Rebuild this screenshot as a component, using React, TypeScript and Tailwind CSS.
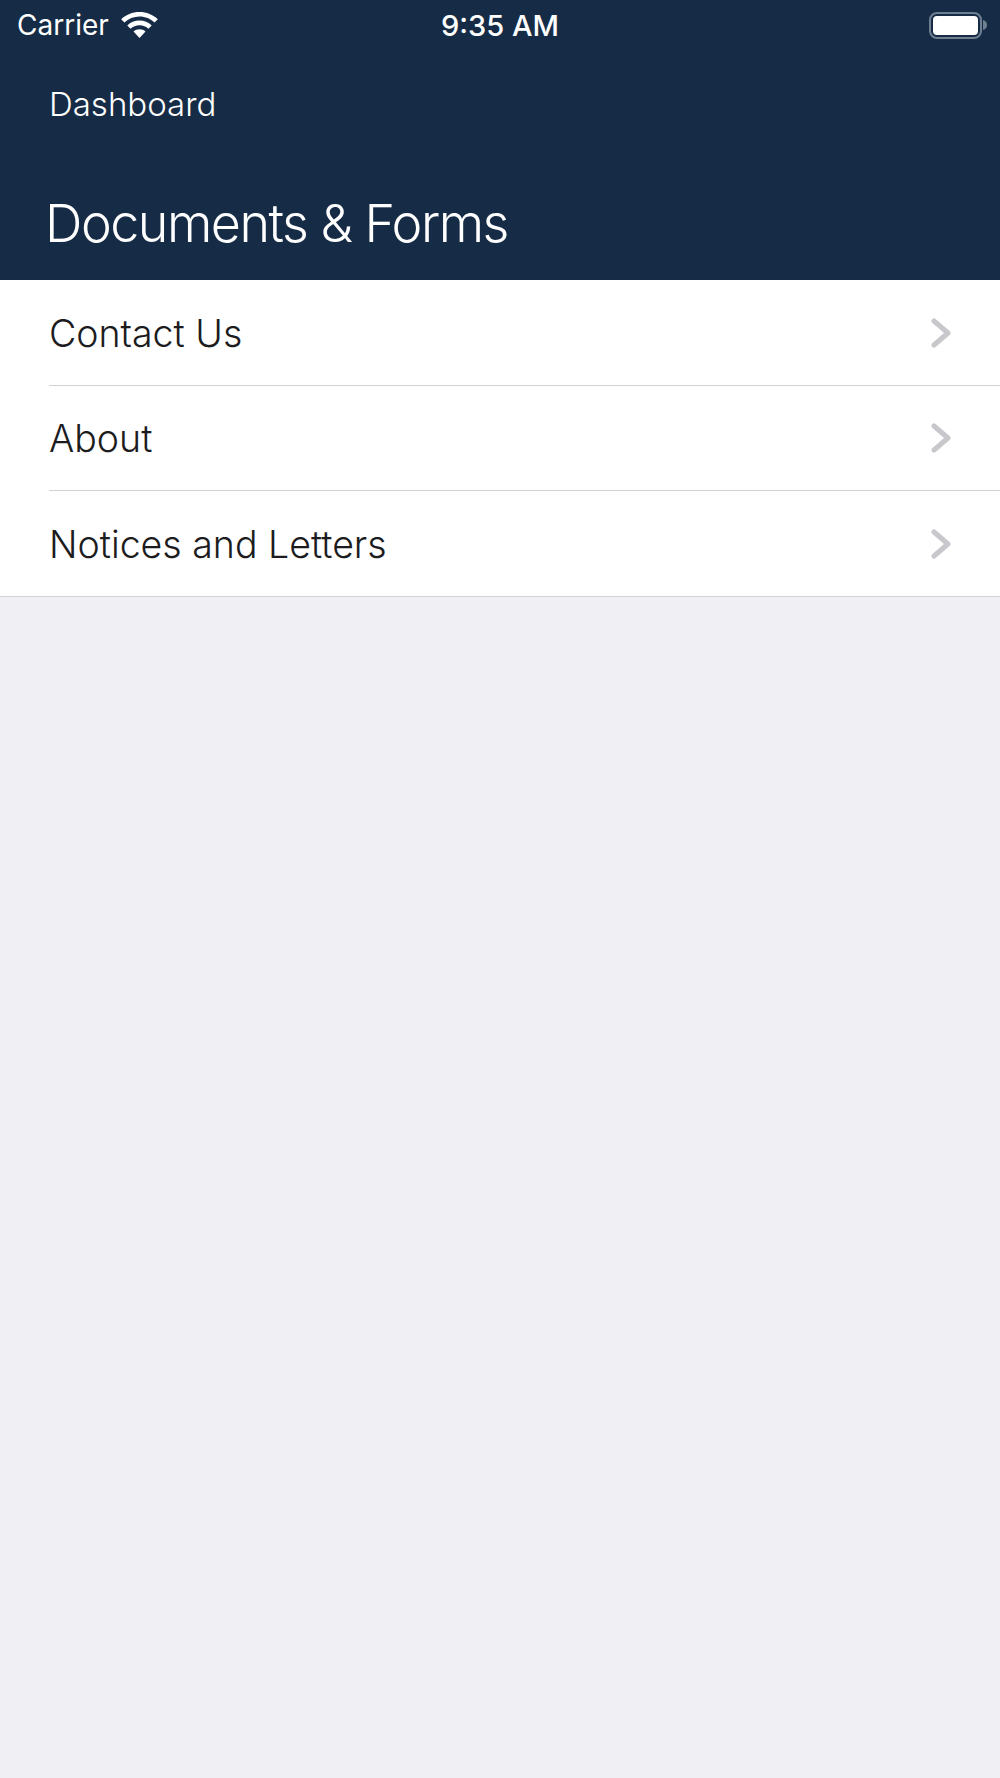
const rows = [
  { label: "Contact Us", box: "h-[106px] border-b border-[#d1d1d6]" },
  { label: "About", box: "h-[105px] border-b border-[#d1d1d6]" },
  { label: "Notices and Letters", box: "h-[105px]" },
];

function WifiIcon() {
  return (
    <svg width="37" height="27" viewBox="0 0 37 27" fill="#fff">
      <path d="M18.5 0C11.4 0 5 2.7.2 7.2l3.2 3.4C7.400 6.900 12.700 4.600 18.500 4.600s11.100 2.300 15.100 6l3.200-3.400C32 2.700 25.600 0 18.500 0z" />
      <path d="M18.500 8.600c-4.700 0-9 1.800-12.200 4.800l3.200 3.400c2.400-2.200 5.500-3.600 9-3.600s6.600 1.400 9 3.600l3.200-3.400c-3.200-3-7.500-4.800-12.200-4.800z" />
      <path d="M18.500 17.200c-2.300 0-4.400.9-6 2.300l6 6.500 6-6.500c-1.600-1.400-3.700-2.300-6-2.300z" />
    </svg>
  );
}

function BatteryIcon() {
  return (
    <div className="flex items-center">
      <div className="flex h-[27px] w-[53px] items-center justify-center rounded-[8px] border-2 border-[#6f7f92]">
        <div className="h-[19px] w-[45px] rounded-[4px] bg-white" />
      </div>
      <svg width="4" height="10" viewBox="0 0 4 10" className="ml-[1px]" fill="#6f7f92">
        <path d="M0 0c2.500.5 4 2.500 4 5s-1.500 4.500-4 5z" />
      </svg>
    </div>
  );
}

function Chevron() {
  return (
    <svg width="20" height="30" viewBox="0 0 20 30" fill="none">
      <path d="M3 3l14 12L3 27" stroke="#c7c7cc" strokeWidth="5" strokeLinecap="round" strokeLinejoin="round" />
    </svg>
  );
}

export default function App() {
  return (
    <div className="flex h-[1778px] w-[1000px] flex-col bg-[#efeff4] font-['Inter',sans-serif]">
      <header className="h-[280px] bg-[#162c46] text-white">
        <div className="flex h-[50px] items-center justify-between pl-[17px] pr-[13px]">
          <div className="flex w-[160px] items-center gap-[12px]">
            <span className="text-[28px] leading-none">Carrier</span>
            <WifiIcon />
          </div>
          <span className="text-[29px] font-medium leading-none">9:35 AM</span>
          <div className="flex w-[164px] justify-end">
            <BatteryIcon />
          </div>
        </div>
        <div className="pl-[49px] pt-[36px] text-[33px] font-light leading-[36px]">Dashboard</div>
        <h1 className="pl-[45px] pt-[73px] text-[52px] font-light leading-[58px] tracking-[-1.5px]">
          Documents &amp; Forms
        </h1>
      </header>
      <ul className="border-b border-[#d1d1d6] bg-white">
        {rows.map((row) => (
          <li key={row.label} className="pl-[49px]">
            <div className={`flex items-center justify-between pr-[49px] ${row.box}`}>
              <span className="pt-[2px] text-[37.5px] font-light leading-none text-[#1c1c1e]">{row.label}</span>
              <Chevron />
            </div>
          </li>
        ))}
      </ul>
    </div>
  );
}
